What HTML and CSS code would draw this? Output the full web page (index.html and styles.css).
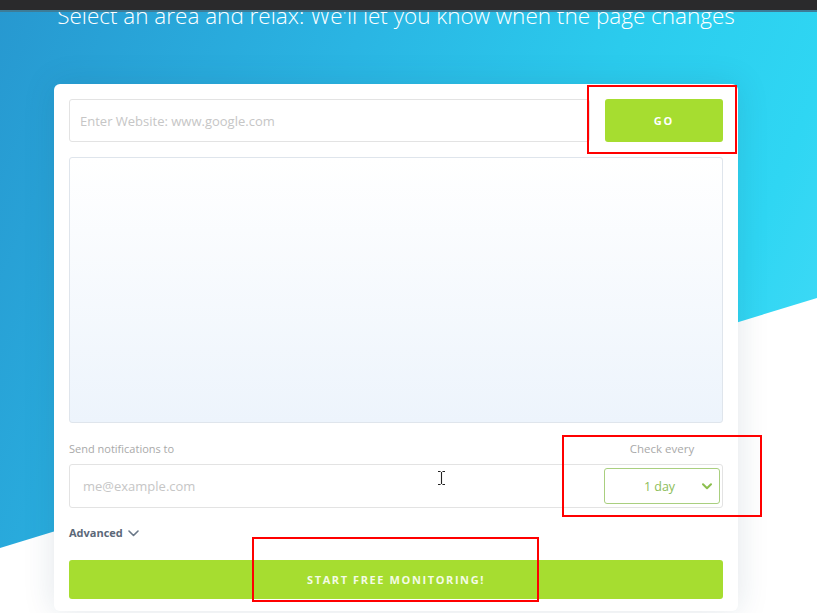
FILE: index.html
```html
<!DOCTYPE html>
<html lang="en">
<head>
<meta charset="utf-8">
<title>Monitor</title>
<link rel="stylesheet" href="styles.css">
</head>
<body>
<div class="page">
  <div class="hero-bg"></div>
  <div class="topbar"></div>
  <main class="main">
    <h1 class="headline">Select an area and relax: We'll let you know when the page changes</h1>
    <section class="card">
      <div class="url-row">
        <div class="field url-field"><span class="placeholder">Enter Website: www.google.com</span></div>
        <button class="btn go-btn">GO</button>
      </div>
      <div class="preview"></div>
      <div class="labels">
        <span class="label">Send notifications to</span>
        <span class="label check-label">Check every</span>
      </div>
      <div class="field email-field">
        <span class="placeholder email-ph">me@example.com</span>
        <div class="select">
          <span class="select-text">1 day</span>
          <svg class="select-chev" width="10" height="7" viewBox="0 0 10 7"><path d="M1 1.2l4 4 4-4" fill="none" stroke="#8cbf4e" stroke-width="2" stroke-linecap="round" stroke-linejoin="round"/></svg>
        </div>
      </div>
      <div class="advanced">Advanced
        <svg width="11" height="7" viewBox="0 0 11 7"><path d="M1 1l4.5 4.5L10 1" fill="none" stroke="#6a7888" stroke-width="1.6" stroke-linecap="round" stroke-linejoin="round"/></svg>
      </div>
      <button class="btn start-btn">START FREE MONITORING!</button>
    </section>
  </main>
  <div class="annot annot-go"></div>
  <div class="annot annot-check"></div>
  <div class="annot annot-start"></div>
  <svg class="cursor" width="9" height="16" viewBox="0 0 9 16"><path d="M1 1.5h2.6M5.4 1.5H8M4.5 2v12M1 14.5h2.6M5.4 14.5H8" fill="none" stroke="#222" stroke-width="1.1"/></svg>
</div>
</body>
</html>
```
FILE: styles.css
```css
html, body {
  margin: 0;
  padding: 0;
}
body {
  width: 817px;
  height: 613px;
  overflow: hidden;
  font-family: "Open Sans", "Liberation Sans", sans-serif;
  background: #fff;
}
.page {
  position: relative;
  width: 817px;
  height: 613px;
  overflow: hidden;
  background: #fff;
}
.hero-bg {
  position: absolute;
  left: 0;
  top: 0;
  width: 100%;
  height: 100%;
  background: linear-gradient(112deg, #2798d0 0%, #2ab5e3 35%, #2bcbed 60%, #2fd6f3 80%, #4cdcf8 100%);
  clip-path: polygon(0 0, 100% 0, 100% 298px, 0 548px);
}
.topbar {
  position: absolute;
  left: 0;
  top: 0;
  width: 100%;
  height: 10px;
  background: #2a2a2c;
  border-bottom: 2px solid #3d7c98;
  z-index: 5;
}
.main {
  position: relative;
  margin-left: 54px;
  width: 684px;
  padding-top: 1px;
}
.headline {
  margin: 0 -10px;
  font-family: "Open Sans", sans-serif;
  font-weight: 300;
  font-size: 22.5px;
  line-height: 30px;
  color: #fff;
  text-align: center;
  white-space: nowrap;
}
.card {
  margin-top: 53px;
  background: #fff;
  border-radius: 6px;
  box-shadow: 0 0 32px rgba(20, 60, 90, 0.13);
  padding: 15px 15px 12px;
  display: flex;
  flex-direction: column;
}
.url-row {
  display: flex;
  gap: 15px;
  height: 43px;
}
.field {
  border: 1px solid #e3e3e3;
  border-radius: 3px;
  display: flex;
  align-items: center;
  box-sizing: border-box;
}
.url-field {
  flex: 1;
  padding-left: 10px;
}
.placeholder {
  font-size: 13px;
  color: #c6c6c6;
}
.btn {
  border: none;
  border-radius: 3px;
  background: #a6dd30;
  color: #fff;
  font-family: "Open Sans", sans-serif;
  font-weight: 700;
  cursor: pointer;
  padding: 0;
}
.go-btn {
  width: 118px;
  font-size: 11px;
  letter-spacing: 2px;
}
.preview {
  margin-top: 15px;
  height: 266px;
  box-sizing: border-box;
  border: 1px solid #dfe5ec;
  border-radius: 3px;
  background: linear-gradient(#ffffff, #edf4fc);
}
.labels {
  margin-top: 18px;
  display: flex;
  justify-content: space-between;
  line-height: 16px;
}
.label {
  font-size: 11px;
  color: #a9a9a9;
}
.check-label {
  width: 116px;
  text-align: center;
  margin-right: 3px;
  font-size: 11.5px;
}
.email-field {
  margin-top: 7px;
  height: 44px;
  padding: 3px 2px 3px 13px;
}
.email-ph {
  flex: 1;
}
.select {
  width: 116px;
  height: 36px;
  box-sizing: border-box;
  border: 1px solid #a9cf7f;
  border-radius: 3px;
  display: flex;
  align-items: center;
  padding-left: 12px;
  padding-right: 7px;
}
.select-text {
  flex: 1;
  text-align: center;
  font-size: 12.5px;
  color: #8cbd58;
}
.select-chev {
  display: block;
}
.advanced {
  margin-top: 17px;
  display: flex;
  align-items: center;
  gap: 5px;
  font-size: 11px;
  font-weight: 700;
  line-height: 16px;
  color: #5b6878;
}
.start-btn {
  margin-top: 19px;
  width: 100%;
  height: 39px;
  font-size: 11px;
  letter-spacing: 1.6px;
  color: #f4fbe6;
}
.annot {
  position: absolute;
  box-sizing: border-box;
  border: 2px solid #ff0000;
  z-index: 6;
}
.annot-go {
  left: 587px;
  top: 85px;
  width: 150px;
  height: 69px;
}
.annot-check {
  left: 562px;
  top: 435px;
  width: 200px;
  height: 82px;
}
.annot-start {
  left: 252px;
  top: 537px;
  width: 287px;
  height: 65px;
}
.cursor {
  position: absolute;
  left: 437px;
  top: 470px;
  z-index: 7;
}
```
